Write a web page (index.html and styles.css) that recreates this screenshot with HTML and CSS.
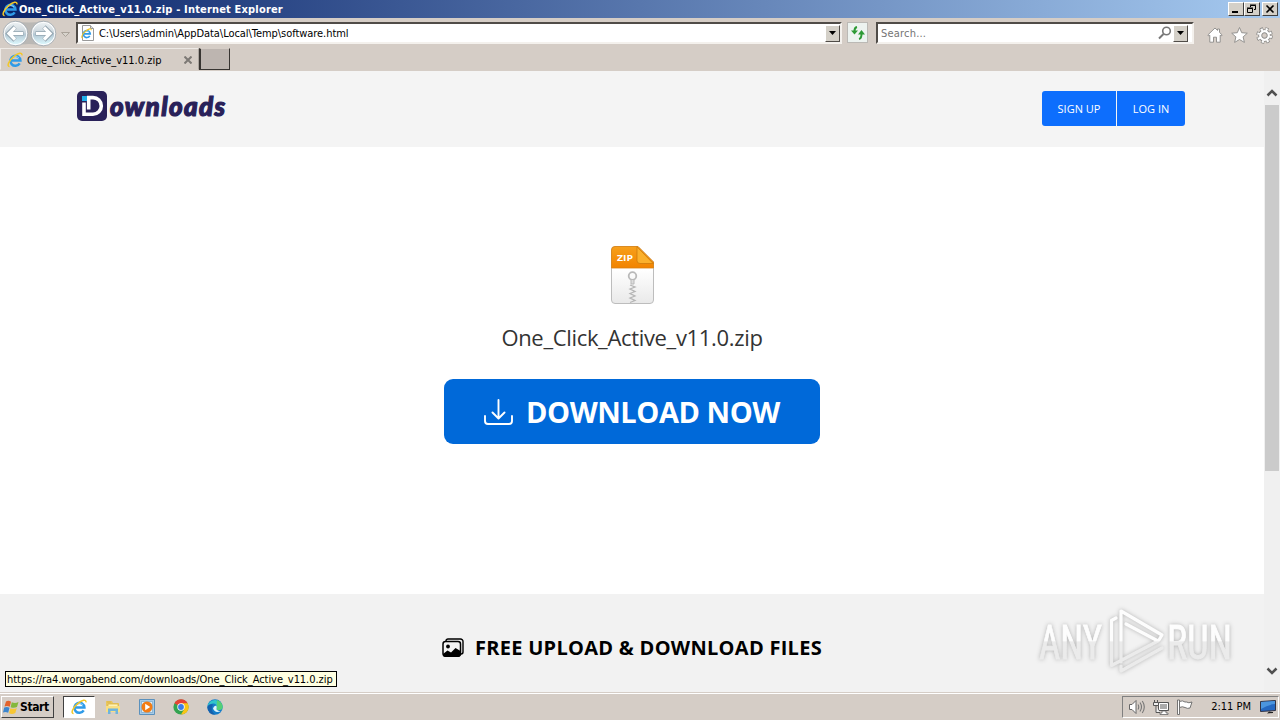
FILE: index.html
```html
<!DOCTYPE html>
<html lang="en">
<head>
    <meta charset="UTF-8">
    <meta name="viewport" content="width=device-width, initial-scale=1.0">
    <title>One_Click_Active_v11.0.zip - Internet Explorer</title>
    <link rel="stylesheet" href="styles.css">
</head>
<body>
    <!-- shared icons -->
    <svg class="defs" width="0" height="0">
        <symbol id="ie" viewBox="0 0 16 16">
            <path d="M4.200 8.600h9.200A5 5 0 1 0 12.700 11.400" fill="none" stroke="#2f9be8" stroke-width="2.500"/>
            <path d="M4.600 7.200A4.500 4.500 0 0 1 12 6" fill="none" stroke="#8bd3fa" stroke-width="1"/>
            <path d="M2.600 14.600C-.600 14.800 1.600 8.600 7 4.400C11 1.200 15.200-.400 15 3.400" fill="none" stroke="#f3c728" stroke-width="1.500"/>
        </symbol>
        <symbol id="caret" viewBox="0 0 7 4">
            <path d="M0 0h7L3.500 4z"/>
        </symbol>
    </svg>

    <div class="titlebar">
        <svg class="ie-icon"><use href="#ie"/></svg>
        <span class="window-title">One_Click_Active_v11.0.zip - Internet Explorer</span>
        <div class="window-buttons">
            <span class="win-btn"><svg width="12" height="10"><path d="M2 8h6" stroke="#000" stroke-width="2"/></svg></span>
            <span class="win-btn"><svg width="12" height="10"><path d="M4.500 3V1.500h5v4H8M4 1h6M1.500 4.500h5v4h-5zM1 4h6" fill="none" stroke="#000"/></svg></span>
            <span class="win-btn close"><svg width="12" height="10"><path d="M2.500 1.500l7 7M9.500 1.500l-7 7" stroke="#000" stroke-width="1.600"/></svg></span>
        </div>
    </div>

    <div class="toolbar">
        <svg class="nav" width="76" height="28" viewBox="0 0 76 28">
            <defs>
                <linearGradient id="glass" x1="0" y1="0" x2="0" y2="1">
                    <stop offset="0" stop-color="#eef3f5"/>
                    <stop offset=".48" stop-color="#c8d3da"/>
                    <stop offset=".52" stop-color="#b2c6d2"/>
                    <stop offset="1" stop-color="#dffaff"/>
                </linearGradient>
            </defs>
            <path d="M15 2Q29 5 43 2A13 13 0 0 1 43 27Q29 23 15 27A13 13 0 0 1 15 2z" fill="#bab8b5"/>
            <circle cx="15.500" cy="14.500" r="11.500" fill="url(#glass)" stroke="#fff" stroke-width="1.500"/>
            <circle cx="15.500" cy="14.500" r="12.300" fill="none" stroke="#8c9aa3" stroke-width=".7"/>
            <circle cx="43.500" cy="14.500" r="11.500" fill="url(#glass)" stroke="#fff" stroke-width="1.500"/>
            <circle cx="43.500" cy="14.500" r="12.300" fill="none" stroke="#8c9aa3" stroke-width=".7"/>
            <path d="M23.500 14.500H9M15 8l-6.500 6.500L15 21" fill="none" stroke="#93a5b0" stroke-width="4.600"/>
            <path d="M23 14.500H9.500M15 8.500l-6 6 6 6" fill="none" stroke="#fff" stroke-width="3.200"/>
            <path d="M35.500 14.500h14.500M44 8l6.500 6.500L44 21" fill="none" stroke="#93a5b0" stroke-width="4.600"/>
            <path d="M36 14.500h13.500M44 8.500l6 6-6 6" fill="none" stroke="#fff" stroke-width="3.200"/>
            <path d="M61.500 13.500h8l-4 4z" fill="#d8d4cd" stroke="#aaa39a"/>
        </svg>
        <div class="field address">
            <svg class="page-icon" width="16" height="16" viewBox="0 0 16 16">
                <path d="M2.500.500h8l3 3v12h-11z" fill="#fff" stroke="#999"/>
                <path d="M10.500.500v3h3" fill="#ddd" stroke="#999"/>
                <use href="#ie" x="1" y="3" width="11" height="11"/>
            </svg>
            <span class="url">C:\Users\admin\AppData\Local\Temp\software.html</span>
            <span class="drop"><svg width="7" height="4"><use href="#caret"/></svg></span>
        </div>
        <span class="refresh">
            <svg width="16" height="16" viewBox="0 0 16 16">
                <path d="M7 2Q4.500 2.500 4.500 6M9 14Q11.500 13.500 11.500 9" fill="none" stroke="#2d9a35" stroke-width="2"/>
                <path d="M1 5.500h7L4.500 9.500zM8 9.500h7L11.500 5z" fill="#2d9a35"/>
            </svg>
        </span>
        <div class="field search">
            <span class="placeholder">Search...</span>
            <svg width="14" height="14" viewBox="0 0 14 14">
                <circle cx="8.500" cy="5" r="3.800" fill="none" stroke="#777" stroke-width="1.600"/>
                <path d="M5.500 8L1 12.500" stroke="#777" stroke-width="2"/>
            </svg>
            <span class="drop"><svg width="7" height="4"><use href="#caret"/></svg></span>
        </div>
        <div class="tools">
            <svg width="16" height="16" viewBox="0 0 16 16"><path d="M.800 8L8 1l2.500 2.400V2h2v3.400L15.200 8l-1 1-1-.8v7H9.500v-5h-3v5H2.800v-7l-1 .8z" fill="#fff" stroke="#8b8a88" stroke-width=".9"/></svg>
            <svg width="17" height="16" viewBox="0 0 17 16"><path d="M8.500.500l2.200 5.200 5.600.500-4.200 3.700 1.300 5.500-4.900-2.900-4.900 2.900 1.300-5.500L.700 6.200l5.600-.5z" fill="#fff" stroke="#8b8a88" stroke-width=".9"/></svg>
            <svg width="17" height="17" viewBox="-8.500 -8.500 17 17">
                <circle r="6.300" fill="none" stroke="#8b8a88" stroke-width="4" stroke-dasharray="2.900 2.050"/>
                <circle r="4.300" fill="none" stroke="#8b8a88" stroke-width="4"/>
                <circle r="6.200" fill="none" stroke="#fff" stroke-width="2.600" stroke-dasharray="2 2.870" stroke-dashoffset="-.4"/>
                <circle r="4.300" fill="none" stroke="#fff" stroke-width="2.200"/>
            </svg>
        </div>
    </div>

    <div class="tabs">
        <div class="tab">
            <svg class="ie-icon"><use href="#ie"/></svg>
            <span class="tab-title">One_Click_Active_v11.0.zip</span>
            <svg width="8" height="8"><path d="M.500.500l7 7M7.500.500l-7 7" stroke="#7d7975" stroke-width="2"/></svg>
        </div>
        <div class="new-tab"></div>
    </div>

    <div class="viewport">
        <div class="page">
            <header class="header">
                <div class="brand">
                    <svg width="30" height="30" viewBox="0 0 30 30">
                        <rect width="30" height="30" rx="5" fill="#292159"/>
                        <path d="M7 11.500v11.700h9a8.300 8.300 0 0 0 0-16.600h-4.300v11.800" fill="none" stroke="#fff" stroke-width="3.600"/>
                        <path d="M5 5h5v5H5z" fill="#21aeea"/>
                    </svg>
                    <span class="brand-name">ownloads</span>
                </div>
                <div class="account">
                    <a class="account-btn signup">SIGN UP</a>
                    <a class="account-btn login">LOG IN</a>
                </div>
            </header>
            <main class="main">
                <svg class="zip-icon" width="44" height="58" viewBox="0 0 44 58">
                    <defs>
                        <linearGradient id="paper" x1="0" y1="0" x2="0" y2="1">
                            <stop offset=".4" stop-color="#fff"/>
                            <stop offset="1" stop-color="#e9e9e9"/>
                        </linearGradient>
                        <linearGradient id="orange" x1="0" y1="0" x2="0" y2="1">
                            <stop offset="0" stop-color="#f7a01b"/>
                            <stop offset="1" stop-color="#f28300"/>
                        </linearGradient>
                    </defs>
                    <path d="M5 .500h23L43.500 16v38a3.500 3.500 0 0 1-3.500 3.500H5A3.500 3.500 0 0 1 1.500 54V4A3.500 3.500 0 0 1 5 .500z" fill="url(#paper)" stroke="#bdbdbd"/>
                    <path d="M1.500 22V4A3.500 3.500 0 0 1 5 .500h23L43.500 16v6z" fill="url(#orange)" stroke="#d98212" stroke-width=".8"/>
                    <path d="M27 .800L43.200 17.500H30a3 3 0 0 1-3-3z" fill="#fbb02c" stroke="#c97508" stroke-width=".7"/>
                    <text x="7" y="15" class="zip-label" textLength="16" lengthAdjust="spacingAndGlyphs">ZIP</text>
                    <circle cx="22.500" cy="30" r="3.800" fill="none" stroke="#b9b9b9" stroke-width="1.800"/>
                    <path d="M21 34v4h3v-4" fill="#ddd" stroke="#b9b9b9"/>
                    <path d="M20 39l5 2-5 2 5 2.500-5 2 5 2.500-5 2 5 2.500-5 2" fill="none" stroke="#b5b5b5" stroke-width="1.300"/>
                </svg>
                <div class="file-name">One_Click_Active_v11.0.zip</div>
                <a class="download">
                    <svg width="30" height="26" viewBox="0 0 30 26" fill="none" stroke="#fff" stroke-width="1.900" stroke-linecap="round" stroke-linejoin="round">
                        <path d="M1 17v5a3 3 0 0 0 3 3h21a3 3 0 0 0 3-3v-5M14.500 1v18M8.500 13.500l6 6 6-6"/>
                    </svg>
                    <span class="download-text">DOWNLOAD NOW</span>
                </a>
            </main>
            <section class="features">
                <svg width="22" height="20" viewBox="0 0 22 20">
                    <path d="M4 3.500V3a2 2 0 0 1 2-2h12.500A2.500 2.500 0 0 1 21 3.500V14a2 2 0 0 1-2 2" fill="none" stroke="#000" stroke-width="1.400"/>
                    <rect x="1" y="3.500" width="17.500" height="14.500" rx="2.500" fill="none" stroke="#000" stroke-width="1.500"/>
                    <circle cx="6" cy="8.500" r="1.900"/>
                    <path d="M1 16l4.500-3.500 3.500 2 4.500-4.500 5 3V17a2 2 0 0 1-2 2H3a2 2 0 0 1-2-2z"/>
                </svg>
                <span class="features-title">FREE UPLOAD &amp; DOWNLOAD FILES</span>
            </section>
        </div>
        <div class="scrollbar">
            <svg width="12" height="8"><path d="M1.500 6.500L6 2l4.500 4.500" fill="none" stroke="#505050" stroke-width="2.500"/></svg>
            <div class="thumb"></div>
            <svg class="down" width="12" height="8"><path d="M1.500 1.500L6 6l4.500-4.500" fill="none" stroke="#505050" stroke-width="2.500"/></svg>
        </div>
        <div class="status"><span class="status-text">https://ra4.worgabend.com/downloads/One_Click_Active_v11.0.zip</span></div>
        <svg class="watermark" width="210" height="76" viewBox="0 0 210 76">
            <defs>
                <linearGradient id="shine" gradientUnits="userSpaceOnUse" x1="0" y1="0" x2="0" y2="76">
                    <stop offset=".48" stop-color="#fff"/>
                    <stop offset=".5" stop-color="#ebebeb"/>
                    <stop offset="1" stop-color="#ebebeb"/>
                </linearGradient>
            </defs>
            <g class="mark">
                <text x="9" y="55" class="mark-text" textLength="63" lengthAdjust="spacingAndGlyphs">ANY</text>
                <text x="137" y="55" class="mark-text" textLength="65" lengthAdjust="spacingAndGlyphs">RUN</text>
                <path d="M86 14L81.500 16.500V61.500L128 37 96 20M91 58V7L132 31l-3 5M91 62v5L132 44" fill="none" stroke="url(#shine)" stroke-width="3.200" stroke-linecap="round" stroke-linejoin="round"/>
            </g>
        </svg>
    </div>

    <div class="taskbar">
        <div class="start">
            <svg width="16" height="15" viewBox="0 0 16 15">
                <path d="M3 1.500Q5.500 0 8 1.800L6.800 6.800Q4 5.200 1.500 6.600z" fill="#e2622b"/>
                <path d="M8.800 2.200Q12 3.800 15.500 2L14 7Q11 8.500 7.600 7.200z" fill="#84b83c"/>
                <path d="M1.200 7.600Q4 6.200 6.500 7.800L5.200 12.800Q2.500 11.500 0 12.500z" fill="#3b85cd"/>
                <path d="M7.400 8.200Q10.500 9.600 13.800 8L12.300 13Q9 14.800 6 13.200z" fill="#f7c634"/>
            </svg>
            <span class="start-text">Start</span>
        </div>
        <div class="quick">
            <span class="quick-item active"><svg class="ie-icon"><use href="#ie"/></svg></span>
            <span class="quick-item">
                <svg width="16" height="16" viewBox="0 0 16 16">
                    <path d="M1 2h6l1 2h6v9H1z" fill="#e9c75e"/>
                    <path d="M2 3h4M3 5h10v5H3z" fill="#fff3b1" stroke="#d6ac42" stroke-width=".7"/>
                    <path d="M1 7h14v6H1z" fill="#f9df83"/>
                    <path d="M3 15V9.500h10V15h-2.500v-3h-5v3z" fill="#6fb4dc"/>
                </svg>
            </span>
            <span class="quick-item">
                <svg width="16" height="16" viewBox="0 0 16 16">
                    <path d="M.500.500h15v15H.500z" fill="#a6cbe7" stroke="#5b91bd"/>
                    <path d="M2.500 2.500h11v11h-11z" fill="#d9edf9" stroke="#6f9cbf" stroke-width=".6"/>
                    <circle cx="8" cy="8" r="5.500" fill="#f37c14"/>
                    <path d="M6.200 4.800v6.400L11.200 8z" fill="#fff"/>
                </svg>
            </span>
            <span class="quick-item">
                <svg width="16" height="16" viewBox="0 0 16 16">
                    <circle cx="8" cy="8" r="7.600" fill="#34a350"/>
                    <path d="M8 8L1.400 4.200A7.600 7.600 0 0 1 14.600 4.200z" fill="#e64335"/>
                    <path d="M8 4.200h6.600A7.600 7.600 0 0 1 8 15.600L11.300 10z" fill="#fac515"/>
                    <circle cx="8" cy="8" r="3.700" fill="#fff"/>
                    <circle cx="8" cy="8" r="2.900" fill="#3b7de8"/>
                </svg>
            </span>
            <span class="quick-item">
                <svg width="16" height="16" viewBox="0 0 16 16">
                    <circle cx="8" cy="8" r="7.700" fill="#147cc9"/>
                    <path d="M.500 7A7.700 7.700 0 0 1 15.700 8Q15.500 11 12 11 9 11 9.600 9.500 11 5.500 7 4.500 3 4 .500 7z" fill="#31c5ca"/>
                    <path d="M10 1Q15.500 3 15.700 8 15.500 11 12 11 9 11 9.600 9.500z" fill="#55cf75"/>
                    <path d="M6 9.500Q6.500 7 9.200 6.600 10 8 9.600 9.300 8.500 11.500 13.500 12.200 8 14.500 6 9.500z" fill="#dff5fb"/>
                    <path d="M.300 8Q2 4.500 6 5.500 2.500 11 8 15.700 1 15.500.300 8z" fill="#1560ac"/>
                </svg>
            </span>
        </div>
        <div class="tray">
            <svg width="18" height="16" viewBox="0 0 18 16">
                <path d="M1.500 5.500H4l4-4v13l-4-4H1.500z" fill="#fff" stroke="#666"/>
                <path d="M10 5.500q1.500 2.500 0 5M12 3.500q3 4.500 0 9M14.300 2q4 6 0 12" fill="none" stroke="#777" stroke-width="1.100"/>
            </svg>
            <svg width="16" height="16" viewBox="0 0 16 16">
                <path d="M5.500 3.500h10v8h-10z" fill="#aaa" stroke="#555"/>
                <path d="M6.500 4.500h8v6h-8z" fill="none" stroke="#fff"/>
                <path d="M9 12h4v2h2v1.500H7V14h2z" fill="#fff" stroke="#555" stroke-width=".7"/>
                <path d="M1.500 1v3M4.500 1v3M.500 3.500h5v3h-5zM3 7v6.500h4" fill="#eee" stroke="#555"/>
            </svg>
            <svg width="17" height="16" viewBox="0 0 17 16">
                <path d="M1.500 1v14.500h2V1z" fill="#fff" stroke="#666" stroke-width=".9"/>
                <path d="M3.500 2.500q3-1.500 5.500.500h1.500q2 1.500 5.500 0l-2 6q-2.500 1-5-.5-2.500-1.500-5.500 0z" fill="#fff" stroke="#666" stroke-width=".9"/>
            </svg>
            <span class="clock">2:11 PM</span>
            <svg width="16" height="14" viewBox="0 0 16 14">
                <path d="M.500 1.500L15.500.500v10L.500 11.500z" fill="#2568c2" stroke="#334"/>
                <path d="M1 2l14-1v3Q8 4.500 1 9z" fill="#4b95df"/>
                <path d="M9 11.500l4 .5v1l-6 .5z" fill="#222"/>
            </svg>
        </div>
    </div>
</body>
</html>
```
FILE: styles.css
```css
* {
    box-sizing: border-box;
}
body {
    width: 1280px;
    height: 720px;
    margin: 0;
    overflow: hidden;
    display: flex;
    flex-direction: column;
    background-color: #d5cdc6;
    color: #000;
    font-family: "DejaVu Sans Condensed", "DejaVu Sans", sans-serif;
    font-stretch: condensed;
    font-size: 11px;
    line-height: 14px;
    white-space: nowrap;
}
svg {
    display: block;
    flex: none;
}
.defs {
    position: absolute;
}
.ie-icon {
    width: 16px;
    height: 16px;
}

/* window chrome */
.titlebar {
    height: 18px;
    flex: none;
    display: flex;
    align-items: center;
    padding: 0 2px;
    background: linear-gradient(to right, #0a246a, #a6caf0);
    color: #fff;
}
.window-title {
    margin-left: 1px;
    padding-top: 2px;
    font-weight: bold;
    letter-spacing: 0.17px;
}
.window-buttons {
    display: flex;
    margin-left: auto;
}
.win-btn {
    width: 16px;
    height: 14px;
    padding: 1px;
    background-color: #d4d0c8;
    border: 1px solid;
    border-color: #fff #404040 #404040 #fff;
}
.close {
    margin-left: 2px;
}
.toolbar {
    height: 30px;
    flex: none;
    display: flex;
    align-items: flex-start;
}
.nav {
    margin-top: 1px;
}
.field {
    height: 22px;
    margin-top: 4px;
    display: flex;
    align-items: center;
    background-color: #fff;
    border: 2px solid;
    border-color: #504c48 #f4f1ed #f4f1ed #504c48;
}
.address {
    width: 766px;
}
.page-icon {
    margin-left: 2px;
}
.url {
    margin-left: 3px;
    padding-top: 2px;
    letter-spacing: -0.05px;
}
.drop {
    width: 15px;
    height: 17px;
    margin-left: auto;
    display: flex;
    align-items: center;
    justify-content: center;
    background-color: #d4d0c8;
    border: 1px solid;
    border-color: #fff #504c48 #504c48 #fff;
}
.refresh {
    width: 21px;
    height: 21px;
    margin: 4px 8px 0 5px;
    padding: 2px;
    background-color: #edf3f0;
    border: 1px solid #bbb9b5;
}
.search {
    width: 318px;
    padding-right: 4px;
}
.placeholder {
    margin: 0 auto 0 3px;
    padding-top: 2px;
    color: #747474;
    letter-spacing: 0.2px;
}
.search .drop {
    margin-left: 1px;
}
.tools {
    display: flex;
    gap: 8px;
    margin: 9px 0 0 13px;
}
.tabs {
    height: 23px;
    flex: none;
    display: flex;
}
.tab {
    width: 199px;
    height: 22px;
    padding: 1px 6px 0 6px;
    display: flex;
    align-items: center;
    border: 1px solid;
    border-color: #eeeae6 #aaa49e transparent #eeeae6;
}
.tab-title {
    margin: 0 auto 0 4px;
    padding-top: 2px;
}
.new-tab {
    width: 31px;
    height: 22px;
    background-color: #bdb5b0;
    border: 1px solid #373431;
    border-top-color: #d5cdc6;
    border-width: 1px 1px 1px 2px;
}

/* browser content */
.viewport {
    position: relative;
    height: 622px;
    flex: none;
    display: flex;
    border-bottom: 1px solid #d5cdc6;
}
.page {
    width: 1264px;
    display: flex;
    flex-direction: column;
    background-color: #fff;
    font-family: "Open Sans", "Noto Sans", sans-serif;
    font-stretch: normal;
}
.header {
    height: 76px;
    padding: 20px 79px 0 77px;
    display: flex;
    align-items: flex-start;
    justify-content: space-between;
    background-color: #f4f4f4;
}
.brand {
    display: flex;
    align-items: center;
    gap: 3px;
}
.brand-name {
    color: #292159;
    font-family: Lato, sans-serif;
    font-size: 26px;
    font-style: italic;
    font-weight: 900;
    line-height: 28px;
    letter-spacing: 1.4px;
    -webkit-text-stroke: 1.2px #292159;
}
.account {
    display: flex;
    gap: 1px;
}
.account-btn {
    height: 35px;
    background-color: #0d6efd;
    color: #fff;
    line-height: 36px;
    text-align: center;
}
.signup {
    width: 74px;
    border-radius: 3px 0 0 3px;
}
.login {
    width: 68px;
    border-radius: 0 3px 3px 0;
}
.main {
    height: 447px;
    display: flex;
    flex-direction: column;
    align-items: center;
}
.zip-icon {
    margin-top: 99px;
}
.zip-label {
    fill: #fff;
    font-family: "Open Sans", sans-serif;
    font-size: 9px;
    font-weight: bold;
}
.file-name {
    margin-top: 17px;
    color: #333;
    font-size: 22px;
    letter-spacing: -0.33px;
    line-height: 32px;
}
.download {
    width: 376px;
    height: 65px;
    margin-top: 26px;
    padding: 1px 0 0 40px;
    display: flex;
    align-items: center;
    gap: 12px;
    background-color: #0069d9;
    border-radius: 9px;
    color: #fff;
}
.download-text {
    font-size: 29px;
    font-weight: bold;
    letter-spacing: -0.45px;
}
.features {
    flex: 1;
    display: flex;
    align-items: flex-start;
    gap: 11px;
    padding: 44px 0 0 442px;
    background-color: #f2f2f2;
}
.features-title {
    font-size: 20px;
    font-weight: bold;
    letter-spacing: 0.28px;
    line-height: 20px;
}
.scrollbar {
    width: 16px;
    display: flex;
    flex-direction: column;
    align-items: center;
    padding: 18px 0 17px;
    background-color: #f0f0f0;
}
.thumb {
    width: 14px;
    height: 366px;
    margin-top: 8px;
    background-color: #cbcbcb;
}
.down {
    margin-top: auto;
}
.status {
    position: absolute;
    left: 5px;
    bottom: 5px;
    width: 332px;
    height: 16px;
    padding-left: 1px;
    background-color: #ffffe1;
    border: 1px solid #000;
    line-height: 15px;
}
.status-text {
    letter-spacing: -0.05px;
}
.watermark {
    position: absolute;
    left: 1030px;
    top: 533px;
}
.mark {
    opacity: 0.9;
    filter: drop-shadow(0 0 2px #aaa);
}
.mark-text {
    fill: url(#shine);
    stroke: url(#shine);
    stroke-width: 0.8px;
    font-family: Roboto, sans-serif;
    font-size: 48px;
}

/* taskbar */
.taskbar {
    flex: 1;
    display: flex;
    padding-top: 2px;
    background-color: #d5cdc6;
    border-top: 1px solid #fff;
}
.start {
    width: 53px;
    height: 22px;
    margin-left: 1px;
    padding-left: 1px;
    display: flex;
    align-items: center;
    border: 1px solid;
    border-color: #fff #404040 #404040 #fff;
}
.start-text {
    margin-left: 1px;
    font-size: 12px;
    font-weight: bold;
    letter-spacing: -0.4px;
}
.quick {
    display: flex;
    gap: 2px;
    margin-left: 9px;
}
.quick-item {
    width: 32px;
    height: 22px;
    display: flex;
    align-items: center;
    justify-content: center;
}
.active {
    background-color: #fff;
    border: 1px solid;
    border-color: #404040 #fff #fff #404040;
}
.tray {
    width: 157px;
    height: 22px;
    margin: 0 1px 0 auto;
    padding: 0 2px 0 5px;
    display: flex;
    align-items: center;
    gap: 7px;
    border: 1px solid;
    border-color: #808080 #fff #fff #808080;
}
.clock {
    margin: 0 2px 0 auto;
}
```
